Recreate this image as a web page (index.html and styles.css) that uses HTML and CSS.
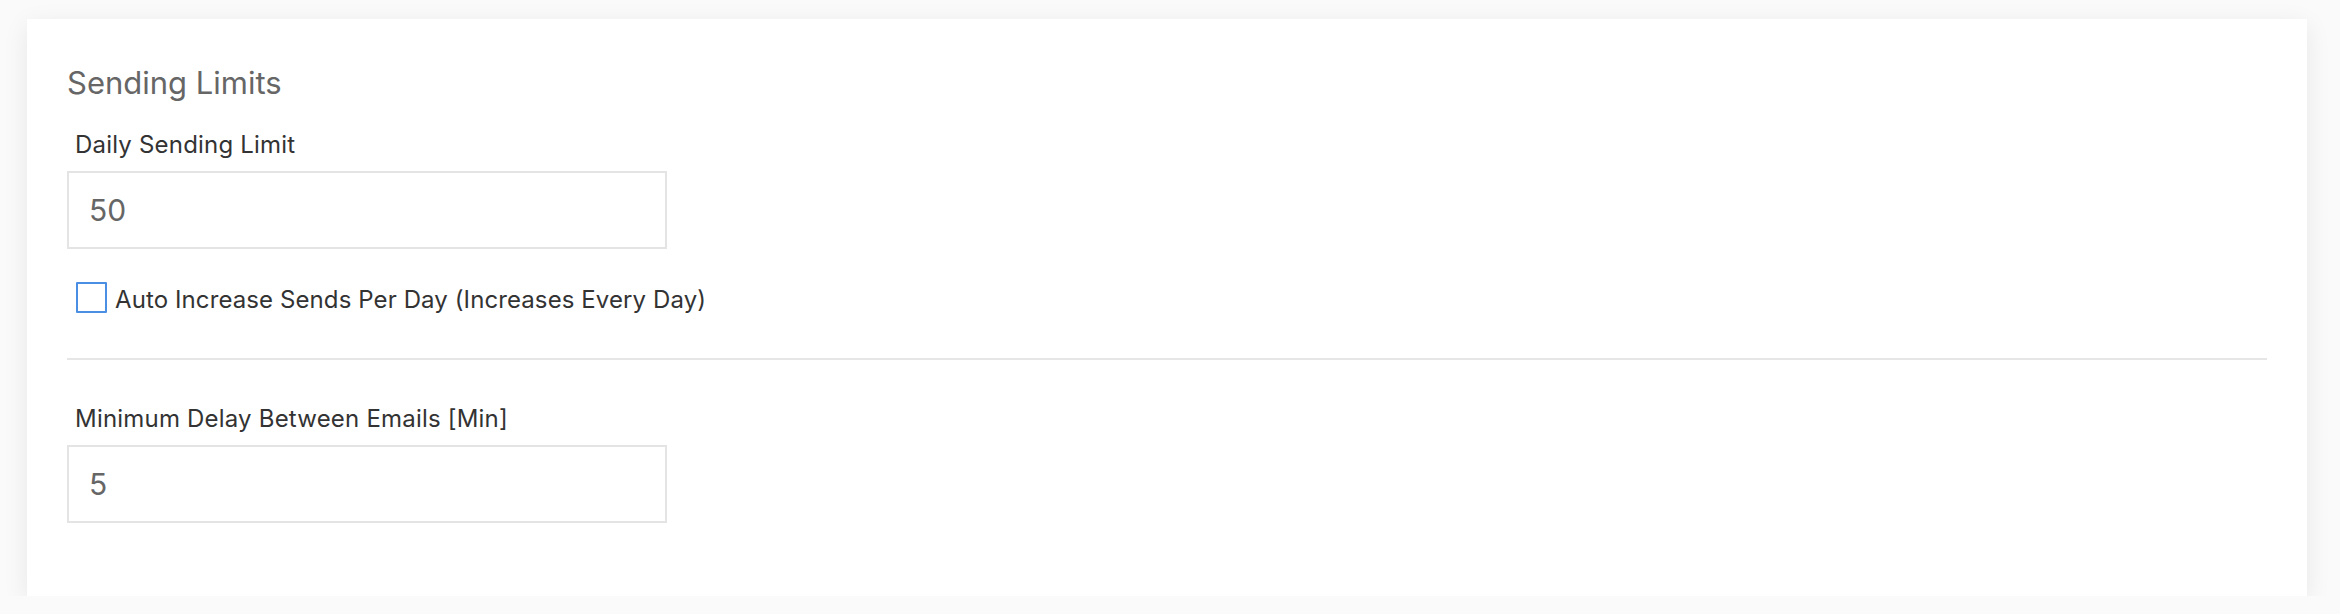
FILE: index.html
```html
<!DOCTYPE html>
<html lang="en">

<head>
    <meta charset="UTF-8">
    <meta name="viewport" content="width=device-width, initial-scale=1.0">
    <title>Sending Limits</title>
    <link rel="stylesheet" href="styles.css">
</head>

<body>
    <section class="card">
        <h2 class="card-title">Sending Limits</h2>

        <div class="field">
            <label for="dailyLimit" class="field-label">Daily Sending Limit</label>
            <input type="number" id="dailyLimit" class="field-input" value="50">
        </div>

        <div class="check-row">
            <input type="checkbox" id="autoIncrease" class="check-box">
            <label for="autoIncrease" class="check-label">Auto Increase Sends Per Day (Increases Every Day)</label>
        </div>

        <hr class="divider">

        <div class="field">
            <label for="minDelay" class="field-label">Minimum Delay Between Emails [Min]</label>
            <input type="number" id="minDelay" class="field-input" value="5">
        </div>
    </section>
</body>

</html>
```
FILE: styles.css
```css
/* Genel sayfa */
body {
    margin: 0;
    background-color: #fafafa;
    font-family: Inter, "Liberation Sans", Arial, sans-serif;
    color: #333;
}

/* Kart */
.card {
    margin: 19px 0 0 27px;
    width: 2280px;
    box-sizing: border-box;
    background: #fff;
    padding: 46px 40px 73px 40px;
    box-shadow: 0 6px 24px rgba(0, 0, 0, 0.08);
}

.card-title {
    margin: 0;
    font-size: 31px;
    line-height: 36px;
    font-weight: 400;
    color: #666;
}

/* Form alanlari */
.field {
    display: flex;
    flex-direction: column;
    align-items: flex-start;
    margin-top: 29px;
}

.field-label {
    font-size: 24px;
    line-height: 30px;
    letter-spacing: 0.2px;
    padding-left: 8px;
    color: #333;
}

.field-input {
    margin-top: 11px;
    width: 600px;
    height: 78px;
    box-sizing: border-box;
    border: 2px solid #e4e4e4;
    border-radius: 0;
    padding: 0 20px;
    font-family: inherit;
    font-size: 30px;
    color: #666;
    background: #fff;
    outline: none;
    -moz-appearance: textfield;
}

.field-input::-webkit-outer-spin-button,
.field-input::-webkit-inner-spin-button {
    -webkit-appearance: none;
    margin: 0;
}

/* Checkbox satiri */
.check-row {
    display: flex;
    align-items: flex-start;
    gap: 8px;
    margin-top: 33px;
    padding-left: 9px;
}

.check-box {
    -webkit-appearance: none;
    appearance: none;
    margin: 0;
    width: 31px;
    height: 31px;
    box-sizing: border-box;
    border: 2px solid #4a8fe3;
    border-radius: 1px;
    background: #fff;
}

.check-label {
    padding-top: 3px;
    font-size: 24px;
    line-height: 30px;
    letter-spacing: 0.1px;
    color: #333;
}

.divider {
    margin: 43px 0 0 0;
    border: none;
    height: 2px;
    background: #e6e6e6;
}

.divider + .field {
    margin-top: 44px;
}
```
